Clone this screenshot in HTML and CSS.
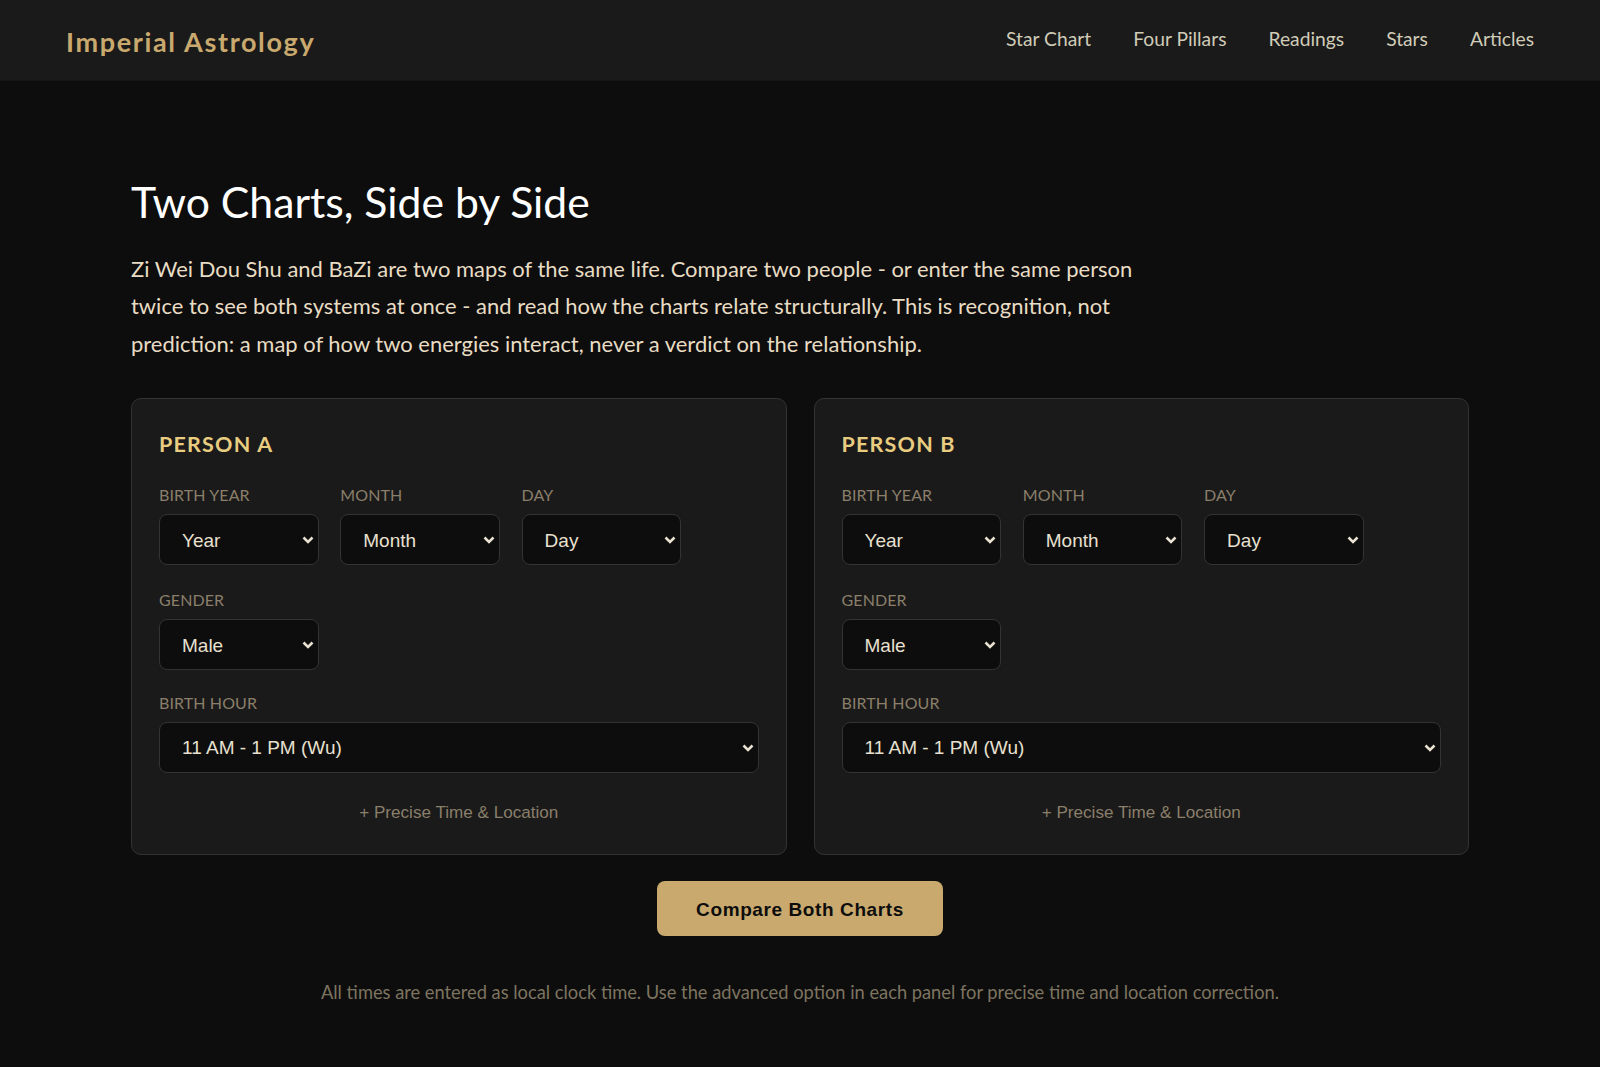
FILE: index.html
```html
<!DOCTYPE html>
<html lang="en">
<head>
<meta charset="utf-8">
<title>Imperial Astrology</title>
<link rel="stylesheet" href="styles.css">
</head>
<body>
<header class="nav">
  <a class="logo" href="#">Imperial Astrology</a>
  <nav class="links">
    <a href="#">Star Chart</a><a href="#">Four Pillars</a><a href="#">Readings</a><a href="#">Stars</a><a href="#">Articles</a>
  </nav>
</header>
<main class="page">
  <h1>Two Charts, Side by Side</h1>
  <p class="intro">Zi Wei Dou Shu and BaZi are two maps of the same life. Compare two people - or enter the same person twice to see both systems at once - and read how the charts relate structurally. This is recognition, not prediction: a map of how two energies interact, never a verdict on the relationship.</p>
  <div class="panels">
    <section class="panel">
      <h2>PERSON A</h2>
      <div class="row date-row">
        <div class="field"><label>BIRTH YEAR</label><select><option>Year</option></select></div>
        <div class="field"><label>MONTH</label><select><option>Month</option></select></div>
        <div class="field"><label>DAY</label><select><option>Day</option></select></div>
      </div>
      <div class="row gender-row">
        <div class="field"><label>GENDER</label><select><option>Male</option><option>Female</option></select></div>
      </div>
      <div class="field wide"><label>BIRTH HOUR</label><select><option>11 AM - 1 PM (Wu)</option></select></div>
      <button class="advanced" type="button">+ Precise Time &amp; Location</button>
    </section>
    <section class="panel">
      <h2>PERSON B</h2>
      <div class="row date-row">
        <div class="field"><label>BIRTH YEAR</label><select><option>Year</option></select></div>
        <div class="field"><label>MONTH</label><select><option>Month</option></select></div>
        <div class="field"><label>DAY</label><select><option>Day</option></select></div>
      </div>
      <div class="row gender-row">
        <div class="field"><label>GENDER</label><select><option>Male</option><option>Female</option></select></div>
      </div>
      <div class="field wide"><label>BIRTH HOUR</label><select><option>11 AM - 1 PM (Wu)</option></select></div>
      <button class="advanced" type="button">+ Precise Time &amp; Location</button>
    </section>
  </div>
  <div class="actions"><button class="compare" type="button">Compare Both Charts</button></div>
  <p class="note">All times are entered as local clock time. Use the advanced option in each panel for precise time and location correction.</p>
</main>
</body>
</html>
```

FILE: styles.css
```css
* { box-sizing: border-box; }
html, body { margin: 0; padding: 0; }
body {
  min-height: 1067px;
  background: #0d0d0d;
  color: #e8e0d0;
  font-family: "Lato", "Open Sans", sans-serif;
}
a { text-decoration: none; color: inherit; }

.nav {
  height: 81px;
  background: #1a1a1a;
  border-bottom: 1px solid #141414;
  padding: 0 66px;
  display: flex;
  align-items: center;
  justify-content: space-between;
}
.logo {
  color: #c9a96e;
  font-size: 27px;
  font-weight: 700;
  letter-spacing: 1.65px;
  padding-top: 3px;
}
.links {
  display: flex;
  gap: 42px;
  font-size: 19.25px;
  color: #d0ccb8;
  padding-bottom: 3px;
}

.page { width: 1338px; margin: 0 auto; padding-top: 96px; }
h1 {
  margin: 0 0 23px;
  font-size: 42.7px;
  line-height: 50px;
  font-weight: 400;
  color: #fff;
}
.intro {
  margin: 0 0 36px;
  max-width: 1020px;
  font-size: 21.96px;
  line-height: 37.4px;
  color: #e8dcc4;
}

.panels { display: grid; grid-template-columns: 1fr 1fr; gap: 27px; }
.panel {
  height: 457px;
  background: #1a1a1a;
  border: 1px solid #333;
  border-radius: 10px;
  padding: 31px 27px 0;
}
h2 {
  margin: 0 0 27px;
  font-size: 21.5px;
  line-height: 28px;
  font-weight: 700;
  letter-spacing: 1.2px;
  color: #e8cc80;
}
.row { display: flex; gap: 21.8px; }
.date-row { margin-bottom: 25px; }
.gender-row { margin-bottom: 23px; }
.field { display: flex; flex-direction: column; width: 159.5px; }
.field.wide { width: 100%; }
label {
  font-size: 16px;
  line-height: 20px;
  margin-bottom: 9px;
  letter-spacing: 0.1px;
  color: #8a7f6a;
}
select {
  appearance: none;
  width: 100%;
  height: 51px;
  padding: 2px 30px 0 22px;
  background-color: #0d0d0d;
  background-image: url("data:image/svg+xml,%3Csvg xmlns='http://www.w3.org/2000/svg' width='12' height='8' viewBox='0 0 12 8'%3E%3Cpath d='M1.5 1.5 6 6l4.5-4.5' fill='none' stroke='%23e8e0d0' stroke-width='2.6'/%3E%3C/svg%3E");
  background-repeat: no-repeat;
  background-position: right 4px center;
  border: 1px solid #333;
  border-radius: 8px;
  color: #e8e0d0;
  font-family: "Liberation Sans", Arial, sans-serif;
  font-size: 19px;
}
.wide select { padding-top: 0; }
.advanced {
  display: block;
  width: 100%;
  margin-top: 28px;
  padding: 0;
  background: none;
  border: 0;
  color: #8a7f6a;
  font-family: "Liberation Sans", Arial, sans-serif;
  font-size: 17.1px;
  line-height: 24px;
  text-align: center;
}
.actions { display: flex; justify-content: center; margin-top: 26px; }
.compare {
  width: 286px;
  height: 55px;
  padding: 2px 0 0;
  background: #c9a96e;
  border: 0;
  border-radius: 8px;
  color: #0d0d0d;
  font-family: "Liberation Sans", Arial, sans-serif;
  font-size: 19px;
  font-weight: 700;
  letter-spacing: 0.6px;
}
.note {
  margin: 43px 0 0;
  font-size: 18.3px;
  line-height: 26px;
  text-align: center;
  color: #7d7460;
}
```
